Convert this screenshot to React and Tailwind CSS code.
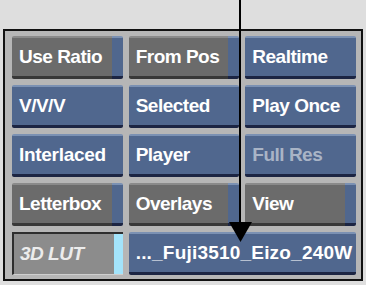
const FONT = { fontFamily: '"Liberation Sans", Arial, sans-serif' };

function BlueBtn({ label, dim, className = '' }) {
  return (
    <div
      className={`flex h-[43px] items-center overflow-hidden whitespace-nowrap rounded-[2px] border-t-2 border-t-[#7b91b3] border-b-[3px] border-b-[#1c2543] bg-[#50678e] pl-[7px] text-[19px] font-bold ${dim ? 'text-[#a9b4c6]' : 'text-white'} ${className}`}
    >
      {label}
    </div>
  );
}

function ToggleBtn({ label }) {
  return (
    <div className="flex h-[43px]">
      <div className="flex flex-1 items-center whitespace-nowrap rounded-l-[2px] border-t-2 border-t-[#8a8a8a] border-b-[3px] border-b-[#383838] bg-[#6b6b6b] pl-[7px] text-[19px] font-bold tracking-[-0.5px] text-white">
        {label}
      </div>
      <div className="w-[11px] rounded-r-[2px] border-t-2 border-t-[#7b91b3] border-b-[3px] border-b-[#1c2543] bg-[#50678e]" />
    </div>
  );
}

export default function App() {
  return (
    <div className="relative h-[285px] w-[366px] bg-[#dedede]" style={FONT}>
      <div className="pt-[29px] pl-[3px]">
        <div className="w-[360px] border-2 border-[#111] bg-[#b6b6b6] pt-[5px] pl-[7px] pb-[4px]">
          <div className="grid w-[344px] grid-cols-3 gap-x-[6px] gap-y-[6px]">
            <ToggleBtn label="Use Ratio" />
            <ToggleBtn label="From Pos" />
            <BlueBtn label="Realtime" className="tracking-[-0.5px]" />
            <BlueBtn label="V/V/V" className="tracking-[-0.5px]" />
            <BlueBtn label="Selected" className="tracking-[-0.5px]" />
            <BlueBtn label="Play Once" className="tracking-[-0.5px]" />
            <BlueBtn label="Interlaced" className="tracking-[-0.3px]" />
            <BlueBtn label="Player" className="tracking-[-0.5px]" />
            <BlueBtn label="Full Res" dim className="tracking-[-0.5px]" />
            <ToggleBtn label="Letterbox" />
            <ToggleBtn label="Overlays" />
            <ToggleBtn label="View" />
            <div className="flex h-[43px] border-t-2 border-l-2 border-t-[#2e2e2e] border-l-[#2e2e2e] border-b border-b-[#cfcfcf]">
              <div className="flex flex-1 items-center bg-[#8c8c8c] pl-[6px] text-[19px] font-bold italic tracking-[-0.5px] text-[#ececec]">
                3D LUT
              </div>
              <div className="w-[9px] bg-[#a3e4fb]" />
            </div>
            <BlueBtn label="..._Fuji3510_Eizo_240W" className="col-span-2 tracking-[0.2px]" />
          </div>
        </div>
      </div>
      <div className="absolute left-[239px] top-0 h-[224px] w-[2px] bg-black" />
      <svg className="absolute left-[229px] top-[222px]" width="23" height="20" viewBox="0 0 23 20">
        <polygon points="0,0 23,0 11.5,20" fill="#000" />
      </svg>
    </div>
  );
}
